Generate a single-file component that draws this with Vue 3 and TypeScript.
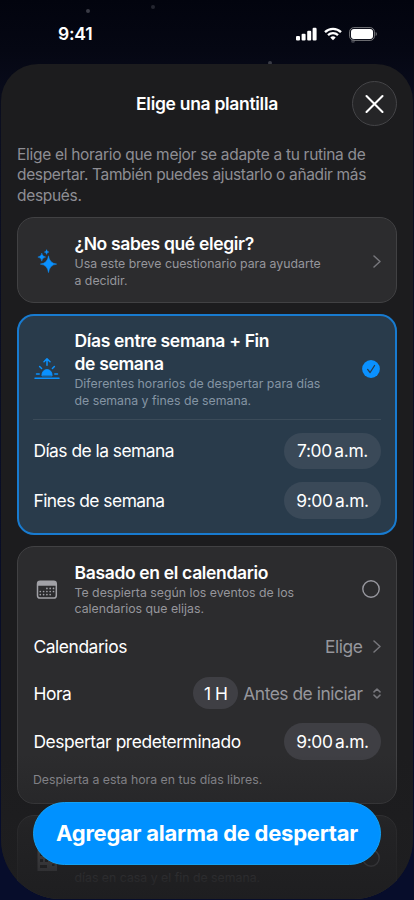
<script setup lang="ts">
interface TimeRow {
  label: string
  time: string
}

const weekRows: TimeRow[] = [
  { label: 'Días de la semana', time: '7:00' },
  { label: 'Fines de semana', time: '9:00' },
]

const calendarDots: number[][] = [
  [13, 9.5], [16.3, 9.5], [19.6, 9.5],
  [6.4, 12.6], [9.7, 12.6], [13, 12.6], [16.3, 12.6], [19.6, 12.6],
  [6.4, 15.7], [9.7, 15.7], [13, 15.7], [16.3, 15.7],
]
</script>

<template>
  <div class="screen">
    <i class="star s1"></i><i class="star s2"></i><i class="star s3"></i><i class="star s4"></i>
    <header class="status">
      <span class="clock">9:41</span>
      <div class="indicators">
        <svg width="21" height="14" viewBox="0 0 21 14" fill="#fff">
          <rect x="0" y="9" width="4" height="4.6" rx="1.1" />
          <rect x="5.6" y="6.7" width="4" height="6.9" rx="1.1" />
          <rect x="11.2" y="3.7" width="4" height="9.9" rx="1.1" />
          <rect x="16.6" y="0.8" width="4" height="12.8" rx="1.1" />
        </svg>
        <svg class="wifi" width="18" height="14" viewBox="0 0 18 14" fill="none" stroke="#fff" stroke-width="2.3">
          <path d="M1 5.1a11.4 11.4 0 0 1 16 0" />
          <path d="M4 8.2a7.2 7.2 0 0 1 10 0" />
          <path d="M9 13.3 6.3 10.5a3.9 3.9 0 0 1 5.4 0Z" fill="#fff" stroke="none" />
        </svg>
        <svg class="battery" width="29" height="14" viewBox="0 0 29 14">
          <rect x=".6" y=".6" width="24.8" height="12.8" rx="4.2" fill="none" stroke="#77787c" stroke-width="1" />
          <rect x="2" y="2" width="22" height="10" rx="2.9" fill="#fff" />
          <path d="M26.7 5v4c1.5-.5 1.5-3.5 0-4Z" fill="#77787c" />
        </svg>
      </div>
    </header>

    <main class="sheet">
      <div class="topbar">
        <h1>Elige una plantilla</h1>
        <button class="close" aria-label="Cerrar">
          <svg width="20" height="20" viewBox="0 0 20 20" fill="none" stroke="#fff" stroke-width="2.1" stroke-linecap="round">
            <path d="M2 2 18 18M18 2 2 18" />
          </svg>
        </button>
      </div>

      <p class="intro">
        Elige el horario que mejor se adapte a tu rutina de<br />
        <span class="tight">despertar. También puedes ajustarlo o añadir más</span><br />
        después.
      </p>

      <section class="card quiz">
        <div class="head">
          <svg class="icon" width="28" height="28" viewBox="0 0 28 28" fill="#0a91ff">
            <path d="M15.5 8.8Q16.4 16.2 23.7 17.1Q16.4 18 15.5 25.6Q14.6 18 7.3 17.1Q14.6 16.2 15.5 8.8Z" stroke="#0a91ff" stroke-width=".5" />
            <path d="M8.8 6Q9.3 9.7 12.7 10.1Q9.3 10.5 8.8 14.2Q8.3 10.5 4.8 10.1Q8.3 9.7 8.8 6Z" stroke="#0a91ff" stroke-width=".4" />
            <path d="M13.6 2.5Q13.9 4.8 16.1 5.1Q13.9 5.4 13.6 7.6Q13.3 5.4 11.1 5.1Q13.3 4.8 13.6 2.5Z" stroke="#0a91ff" stroke-width=".3" />
          </svg>
          <div class="copy">
            <h2>¿No sabes qué elegir?</h2>
            <p>Usa este breve cuestionario para ayudarte<br />a decidir.</p>
          </div>
          <svg class="chevron" width="8" height="13" viewBox="0 0 8 13"><path d="m1 1 6 5.5L1 12" /></svg>
        </div>
      </section>

      <section class="card selected">
        <div class="head">
          <svg class="icon" width="28" height="28" viewBox="0 0 28 28" fill="none" stroke="#0a91ff" stroke-width="1.5" stroke-linecap="round" stroke-linejoin="round">
            <path d="M2 22.3H26M3.5 17.9H6.2M21.8 17.9H24.5M6.6 10.5 8.6 12.5M21.4 10.5 19.4 12.5M14 9.3V3M11 5.7 14 2.7 17 5.7" />
            <path d="M8.9 19.6C8.4 11.4 19.6 11.4 19.1 19.6Z" fill="#0a91ff" stroke-width=".8" />
          </svg>
          <div class="copy">
            <h2>Días entre semana + Fin<br />de semana</h2>
            <p>Diferentes horarios de despertar para días<br />de semana y fines de semana.</p>
          </div>
          <svg class="radio" width="18" height="18" viewBox="0 0 18 18">
            <circle cx="9" cy="9" r="8.9" fill="#0a91ff" />
            <path d="m5.6 9.4 2.5 3.1 4.5-7" fill="none" stroke="#293b4b" stroke-width="1.3" stroke-linecap="round" stroke-linejoin="round" />
          </svg>
        </div>
        <div class="divider"></div>
        <div class="times">
          <div v-for="row in weekRows" :key="row.label" class="row">
            <span class="label">{{ row.label }}</span>
            <span class="pill"><span>{{ row.time }}</span><span class="ampm">a.m.</span></span>
          </div>
        </div>
      </section>

      <section class="card calendar">
        <div class="head">
          <svg class="icon" width="28" height="28" viewBox="0 0 28 28">
            <g transform="translate(1 1.7)">
              <rect x="3.5" y="3.6" width="18.8" height="16.8" rx="2.6" fill="none" stroke="#a1a1a6" stroke-width="1.5" />
              <path d="M3.5 8V6Q3.5 3.5 6 3.5H20Q22.3 3.5 22.3 6V8Z" fill="#a1a1a6" />
              <circle v-for="(dot, i) in calendarDots" :key="i" :cx="dot[0] - 0.1" :cy="dot[1] + 1.2" r=".85" fill="#a1a1a6" />
            </g>
          </svg>
          <div class="copy">
            <h2>Basado en el calendario</h2>
            <p>Te despierta según los eventos de los<br />calendarios que elijas.</p>
          </div>
          <svg class="radio" width="18" height="18" viewBox="0 0 18 18"><circle cx="9" cy="9" r="8.2" fill="none" stroke="#98989f" stroke-width="1.4" /></svg>
        </div>
        <div class="row calendars">
          <span class="label">Calendarios</span>
          <span class="value">Elige
            <svg class="chevron" width="8" height="13" viewBox="0 0 8 13"><path d="m1 1 6 5.5L1 12" /></svg>
          </span>
        </div>
        <div class="row hour">
          <span class="label">Hora</span>
          <span class="value"><span class="mini">1 H</span><span class="before">Antes de iniciar</span>
            <svg class="updown" width="8" height="11" viewBox="0 0 8 11"><path d="M1 3.9 4 1l3 2.9M1 7.1 4 10l3-2.9" /></svg>
          </span>
        </div>
        <div class="row default">
          <span class="label">Despertar predeterminado</span>
          <span class="pill"><span>9:00</span><span class="ampm">a.m.</span></span>
        </div>
        <p class="note">Despierta a esta hora en tus días libres.</p>
      </section>

      <section class="card hybrid">
        <div class="head">
          <svg class="icon" width="28" height="28" viewBox="0 0 28 28" fill="#a1a1a6">
            <path fill-rule="evenodd" d="M4.5 5H17V11H24V26H4.5ZM7 8V11H10V8ZM12 8V11H15V8ZM7 14V17H10V14ZM12 14V17H15V14ZM7 20V23H14V20ZM19 14V16H21.5V14ZM19 19V21H21.5V19Z" />
          </svg>
          <div class="copy">
            <p>días en casa y el fin de semana.</p>
          </div>
          <svg class="radio" width="18" height="18" viewBox="0 0 18 18"><circle cx="9" cy="9" r="8.2" fill="none" stroke="#98989f" stroke-width="1.4" /></svg>
        </div>
      </section>
      <div class="fade"></div>
      <button class="cta"><span>Agregar alarma de despertar</span></button>
    </main>
  </div>
</template>

<style>
body {
  margin: 0;
  background: #02040f;
}
</style>

<style scoped>
* {
  box-sizing: border-box;
}

.screen {
  position: relative;
  width: 414px;
  height: 900px;
  overflow: hidden;
  display: flex;
  flex-direction: column;
  background: linear-gradient(#02040e 0, #050713 50px, #0b0e20 120px, #070d2b 800px, #070d2b 900px);
  font-family: Inter, "Liberation Sans", sans-serif;
  color: #fff;
  white-space: nowrap;
}

h1, h2, p {
  margin: 0;
}

button {
  border: 0;
  padding: 0;
  font: inherit;
  color: inherit;
}

svg {
  display: block;
  flex: none;
}

.star {
  position: absolute;
  width: 4px;
  height: 4px;
  border-radius: 50%;
  background: #3a3c46;
  filter: blur(.6px);
}

.s1 { left: 86px; top: 9px; }
.s2 { left: 151px; top: 5px; opacity: .6; }
.s3 { left: 268px; top: 61px; }
.s4 { left: 351px; top: 39px; }

.status {
  height: 64px;
  flex: none;
  display: flex;
  justify-content: space-between;
  padding: 27px 36px 0 58px;
}

.clock {
  font-size: 17.5px;
  font-weight: 600;
  line-height: 14px;
  letter-spacing: -.2px;
}

.indicators {
  position: relative;
  display: flex;
}

.wifi { margin-left: 7px; }
.battery { margin-left: 7px; }

.sheet {
  position: relative;
  width: 412px;
  height: 835px;
  margin-left: 1px;
  padding: 0 16px;
  border-radius: 37px 37px 60px 60px;
  overflow: hidden;
  background: #1c1c1e;
  display: flex;
  flex-direction: column;
}

.topbar {
  height: 79px;
  flex: none;
  display: grid;
  grid-template-columns: 45px 1fr 45px;
  align-items: center;
}

h1 {
  grid-column: 2;
  text-align: center;
  font-size: 17.5px;
  font-weight: 600;
  letter-spacing: -.3px;
}

.close {
  width: 45px;
  height: 45px;
  border-radius: 50%;
  border: 1px solid #454548;
  background: #252527;
  display: grid;
  place-items: center;
}

.close svg { transform: translateX(-.5px); }

.intro {
  height: 73.6px;
  flex: none;
  padding-top: 1.5px;
  font-size: 15.5px;
  line-height: 20.6px;
  letter-spacing: -.3px;
  color: #8e8e94;
}

.tight { letter-spacing: -.35px; }

.card {
  flex: none;
  border: 1px solid #414143;
  border-radius: 17px;
  background: #2c2c2e;
  padding: 15px 15px 0;
  margin-bottom: 11px;
}

.head {
  display: flex;
  align-items: center;
}

.icon {
  margin-right: 13.5px;
}

.copy {
  flex: 1;
}

h2 {
  font-size: 17.5px;
  line-height: 22.7px;
  font-weight: 600;
  letter-spacing: -.34px;
}

.copy p,
.note {
  font-size: 12.3px;
  line-height: 16.5px;
  letter-spacing: 0;
  color: #96969c;
}

.copy p {
  padding-top: .4px;
}

.chevron,
.updown {
  fill: none;
  stroke: #77777c;
  stroke-width: 1.5;
  stroke-linecap: round;
  stroke-linejoin: round;
}

.quiz { height: 86.7px; }
.quiz .head { padding-top: .4px; }

.selected {
  height: 220.5px;
  border: 2px solid #187bd0;
  background: #293b4b;
  padding: 14px 14px 0;
}

.selected .copy p { color: #8595a4; }
.radio { margin-right: 1px; margin-bottom: 1.4px; }

.divider {
  height: 1px;
  margin-top: 10px;
  background: #3b4b59;
}

.times {
  display: flex;
  flex-direction: column;
  gap: 13px;
  margin-top: 12.5px;
}

.row {
  display: flex;
  align-items: center;
  justify-content: space-between;
  font-size: 17.4px;
  letter-spacing: -.42px;
}

.label {
  padding-left: .4px;
}

.times .label { letter-spacing: -.52px; }

.pill {
  width: 97px;
  height: 36.5px;
  border-radius: 19px;
  background: #3f3f44;
  display: flex;
  align-items: center;
  justify-content: center;
  gap: 2.5px;
  letter-spacing: -.35px;
}

.selected .pill { background: #3a4958; }

.calendar { height: 258px; }

.value {
  display: flex;
  align-items: center;
  color: #96969c;
}

.value > svg { margin-left: 10.5px; }

.calendars { height: 24px; margin-top: 16.5px; }
.hour { height: 32px; margin-top: 19px; }
.default { margin-top: 14px; }
.note { margin-top: 12px; }

.before { letter-spacing: -.48px; }

.mini {
  width: 45px;
  height: 32px;
  margin-right: 5px;
  border-radius: 16px;
  background: #3f3f44;
  color: #fff;
  display: grid;
  place-items: center;
}

.hybrid { height: 120px; }
.hybrid .head { height: 56px; }
.hybrid .copy { align-self: flex-end; }

.fade {
  position: absolute;
  left: 0;
  right: 0;
  bottom: 0;
  height: 145px;
  background: linear-gradient(rgba(30, 30, 32, 0) 0, rgba(30, 30, 32, .3) 45px, rgba(30, 30, 32, .65) 75px, rgba(30, 30, 32, .85) 115px, #1e1e20 145px);
}

.cta {
  position: absolute;
  left: 32px;
  top: 738px;
  width: 348px;
  height: 62.5px;
  border: 1px solid #12a1f4;
  border-radius: 32px;
  background: #0091ff;
  font-size: 22px;
  font-weight: 700;
  letter-spacing: -.25px;
}
</style>
